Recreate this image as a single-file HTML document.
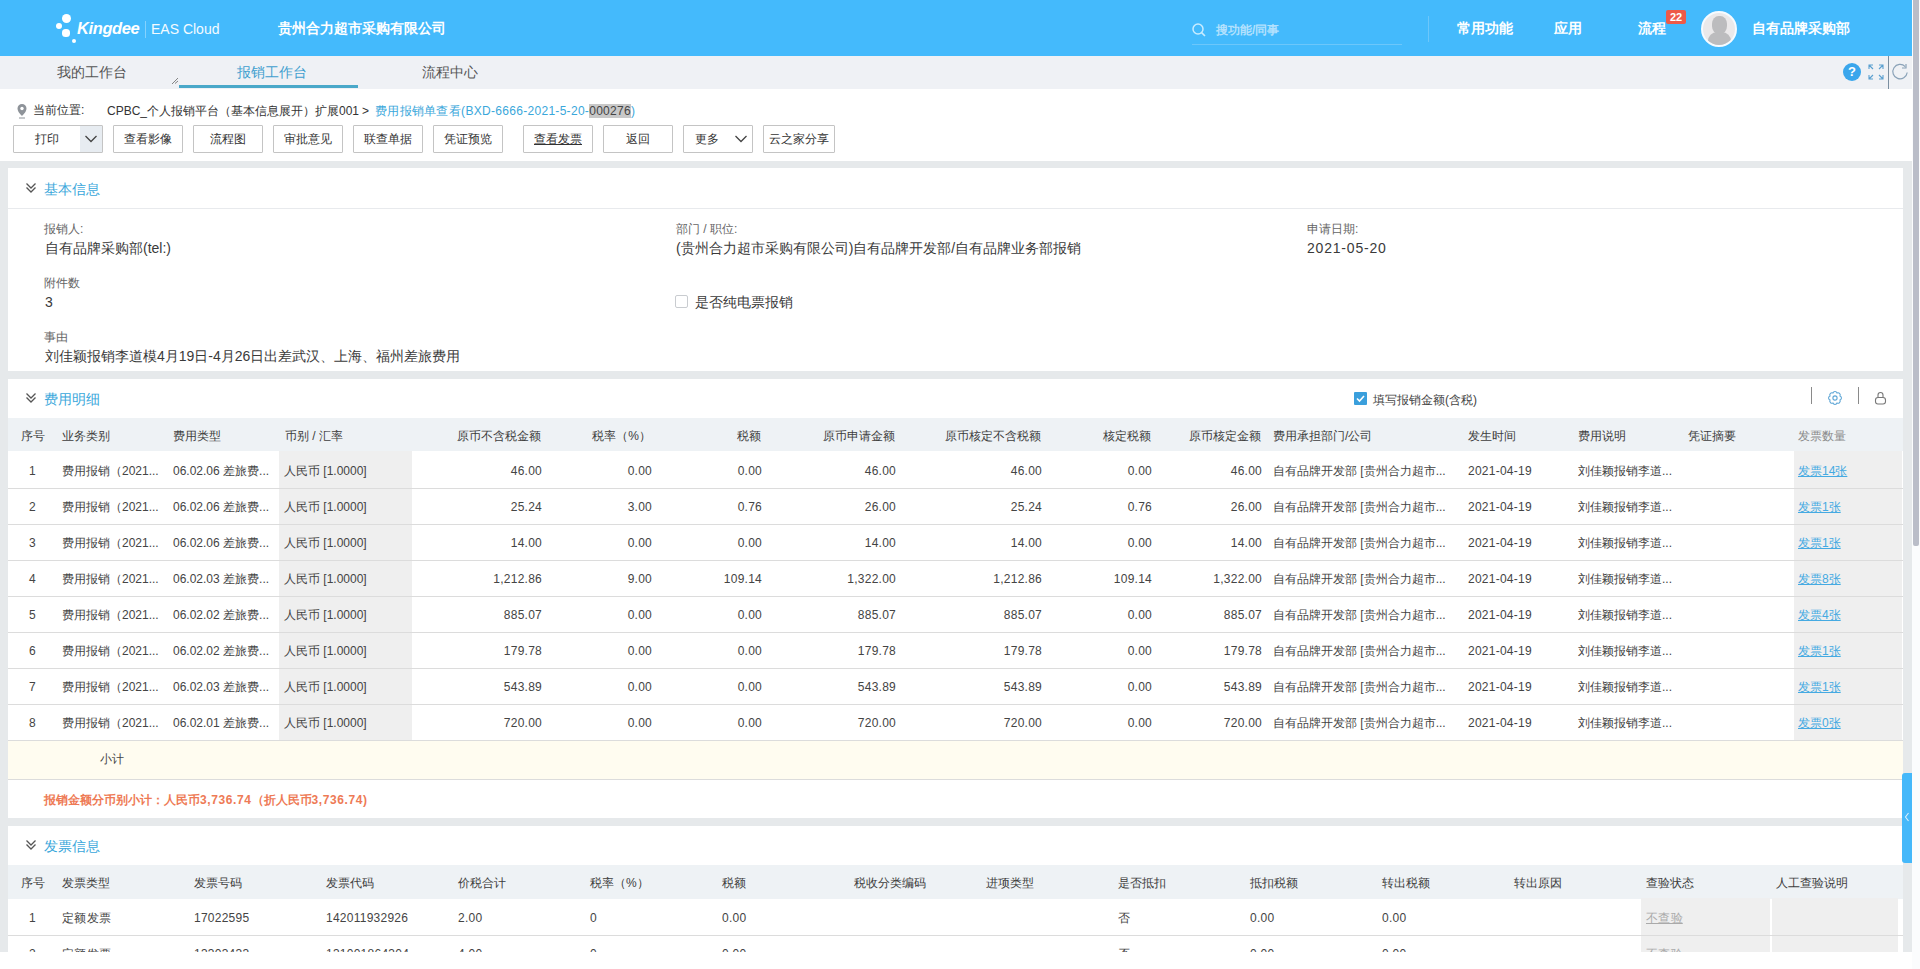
<!DOCTYPE html><html><head><meta charset="utf-8"><style>
*{margin:0;padding:0;box-sizing:border-box}
html,body{width:1920px;height:969px;overflow:hidden;background:#fff;font-family:"Liberation Sans",sans-serif;color:#333;font-size:12px}
.abs{position:absolute}
.t{position:absolute;white-space:nowrap;line-height:16px}
#hdr{position:absolute;left:0;top:0;width:1912px;height:56px;background:#44bafc}
#tabs{position:absolute;left:0;top:56px;width:1912px;height:33px;background:#eff1f5}
.btn{position:absolute;top:125px;height:28px;border:1px solid #c4c4c4;border-radius:1px;background:#fff;text-align:center;line-height:27px;font-size:12px;color:#333}
.band{position:absolute;left:0;background:#e6e9eb}
.card{position:absolute;left:8px;width:1895px;background:#fff}
.sec{position:absolute;font-size:14px;color:#3aa7db;line-height:18px}
.chev{position:absolute;width:12px;height:12px}
.lbl{position:absolute;font-size:12px;color:#666;line-height:14px;white-space:nowrap}
.val{position:absolute;font-size:14px;color:#3a3a3a;line-height:18px;white-space:nowrap}
.th{position:absolute;font-size:12px;color:#3d3d3d;line-height:16px;white-space:nowrap}
.td{position:absolute;font-size:12px;color:#444;line-height:16px;white-space:nowrap}
.n{letter-spacing:0.25px}
.r{text-align:right}
.hl{position:absolute;height:1px;background:#dcdcdc}
.lnk{color:#45aae2;text-decoration:underline}
</style></head><body>
<div id="hdr"></div>
<div class="abs" style="left:61.5px;top:13.5px;width:9.0px;height:9.0px;border-radius:50%;background:#fff"></div>
<div class="abs" style="left:55.6px;top:22.6px;width:6.8px;height:6.8px;border-radius:50%;background:#fff"></div>
<div class="abs" style="left:62.4px;top:29.4px;width:7.2px;height:7.2px;border-radius:50%;background:#fff"></div>
<div class="abs" style="left:71.6px;top:38.6px;width:4.8px;height:4.8px;border-radius:50%;background:#fff"></div>
<div class="t" style="left:77px;top:18px;font-size:16.5px;line-height:20px;color:#fff;font-weight:bold;font-style:italic;letter-spacing:-0.4px">Kingdee</div>
<div class="abs" style="left:145px;top:21px;width:1px;height:17px;background:rgba(255,255,255,.35)"></div>
<div class="t" style="left:151px;top:20px;font-size:14px;line-height:18px;color:#f4fbff">EAS Cloud</div>
<div class="t" style="left:278px;top:19px;font-size:14px;line-height:18px;color:#fff;font-weight:bold">贵州合力超市采购有限公司</div>
<svg class="abs" style="left:1191px;top:22px" width="16" height="16" viewBox="0 0 16 16"><circle cx="7" cy="7" r="5" fill="none" stroke="#c8ecff" stroke-width="1.5"/><line x1="10.6" y1="10.6" x2="14" y2="14" stroke="#c8ecff" stroke-width="1.6"/></svg>
<div class="t" style="left:1216px;top:22px;font-size:12px;font-weight:bold;color:#b3e1fd">搜功能/同事</div>
<div class="abs" style="left:1192px;top:44px;width:210px;height:1px;background:#6cc7fb"></div>
<div class="abs" style="left:1428px;top:16px;width:1px;height:26px;background:#6cc7fb"></div>
<div class="t" style="left:1457px;top:19px;font-size:14px;line-height:18px;color:#fff;font-weight:bold">常用功能</div>
<div class="t" style="left:1554px;top:19px;font-size:14px;line-height:18px;color:#fff;font-weight:bold">应用</div>
<div class="t" style="left:1638px;top:19px;font-size:14px;line-height:18px;color:#fff;font-weight:bold">流程</div>
<div class="abs" style="left:1666px;top:10px;width:20px;height:14px;background:#ee5a48;border-radius:2px;color:#fff;font-size:11px;font-weight:bold;line-height:14px;text-align:center">22</div>
<div class="abs" style="left:1701px;top:11px;width:36px;height:36px;border-radius:50%;background:#ebe9ea;border:2px solid #f6fbff;overflow:hidden"><div class="abs" style="left:9px;top:3px;width:15px;height:18px;border-radius:45%;background:#bcbcbe"></div><div class="abs" style="left:5px;top:19px;width:23px;height:20px;border-radius:9px 9px 0 0;background:#bcbcbe"></div></div>
<div class="t" style="left:1752px;top:19px;font-size:14px;line-height:18px;color:#fff;font-weight:bold">自有品牌采购部</div>
<div id="tabs"></div>
<div class="t" style="left:57px;top:63px;font-size:14px;line-height:18px;color:#555">我的工作台</div>
<div class="t" style="left:237px;top:63px;font-size:14px;line-height:18px;color:#3f9fcf">报销工作台</div>
<div class="abs" style="left:179px;top:85px;width:179px;height:3px;background:#4aa8c9"></div>
<svg class="abs" style="left:171px;top:77px" width="8" height="8" viewBox="0 0 8 8"><path d="M1 7L7 1M4 6.5L7 4" stroke="#777" stroke-width="0.9" fill="none"/></svg>
<div class="t" style="left:422px;top:63px;font-size:14px;line-height:18px;color:#555">流程中心</div>
<div class="abs" style="left:1843px;top:63px;width:18px;height:18px;border-radius:50%;background:#3aa6ec;color:#fff;font-weight:bold;font-size:13px;line-height:18px;text-align:center">?</div>
<svg class="abs" style="left:1868px;top:64px" width="16" height="16" viewBox="0 0 16 16" fill="none" stroke="#5a9fcf" stroke-width="1.1"><path d="M1 5V1h4M11 1h4v4M15 11v4h-4M5 15H1v-4M1 1l4 4M15 1l-4 4M15 15l-4-4M1 15l4-4"/></svg>
<div class="abs" style="left:1888px;top:56px;width:1px;height:33px;background:#7a8ea0"></div>
<svg class="abs" style="left:1891px;top:63px" width="18" height="18" viewBox="0 0 18 18" fill="none" stroke="#8aa2b8" stroke-width="1.2"><path d="M16.2 9.5A7.2 7.2 0 1 1 14.2 3.6"/><path d="M15 1v4h-4"/></svg>
<svg class="abs" style="left:16px;top:103px" width="12" height="16" viewBox="0 0 12 16"><path d="M6 1a4.5 4.5 0 0 0-4.5 4.5C1.5 9 6 13 6 13s4.5-4 4.5-7.5A4.5 4.5 0 0 0 6 1z" fill="#8e9399"/><circle cx="6" cy="5.5" r="1.7" fill="#fff"/><rect x="3" y="14.5" width="6" height="1" fill="#8e9399"/></svg>
<div class="t" style="left:33px;top:102px;color:#333">当前位置:</div>
<div class="t" style="left:107px;top:103px;color:#333">CPBC_个人报销平台（基本信息展开）扩展001</div><div class="t" style="left:362px;top:103px;color:#333">&gt;</div><div class="t" style="left:375px;top:103px;color:#3aa7db;letter-spacing:0.3px">费用报销单查看(BXD-6666-2021-5-20-<span style="background:#c8c8c8;color:#444">000276</span>)</div>
<div class="btn" style="left:13px;width:90px;text-align:left"><div class="abs" style="left:0;top:0;width:66px;text-align:center">打印</div><div class="abs" style="left:66px;top:0;width:22px;height:26px;background:#e7ecf1"></div><svg class="abs" style="left:70px;top:8px" width="14" height="10" viewBox="0 0 14 10"><path d="M1.5 2l5.5 5.5L12.5 2" fill="none" stroke="#444" stroke-width="1.3"/></svg></div>
<div class="btn" style="left:113px;width:70px">查看影像</div>
<div class="btn" style="left:193px;width:70px">流程图</div>
<div class="btn" style="left:273px;width:70px">审批意见</div>
<div class="btn" style="left:353px;width:70px">联查单据</div>
<div class="btn" style="left:433px;width:70px">凭证预览</div>
<div class="btn" style="left:523px;width:70px"><span style="text-decoration:underline">查看发票</span></div>
<div class="btn" style="left:603px;width:70px">返回</div>
<div class="btn" style="left:683px;width:70px;text-align:left"><div class="abs" style="left:0;top:0;width:46px;text-align:center">更多</div><svg class="abs" style="left:50px;top:8px" width="14" height="10" viewBox="0 0 14 10"><path d="M1.5 2l5.5 5.5L12.5 2" fill="none" stroke="#444" stroke-width="1.3"/></svg></div>
<div class="btn" style="left:763px;width:72px">云之家分享</div>
<div class="band" style="top:161px;width:1912px;height:791px"></div>
<div class="card" style="top:168px;height:203px"></div>
<svg class="abs" style="left:25px;top:182px" width="12" height="12" viewBox="0 0 12 12" fill="none" stroke="#555" stroke-width="1.3"><path d="M1.5 1.5L6 6l4.5-4.5M1.5 5.5L6 10l4.5-4.5"/></svg>
<div class="sec" style="left:44px;top:180px">基本信息</div>
<div class="hl" style="left:8px;top:208px;width:1895px;background:#e8eaed"></div>
<div class="lbl" style="left:44px;top:222px">报销人:</div>
<div class="val" style="left:45px;top:239px">自有品牌采购部(tel:)</div>
<div class="lbl" style="left:676px;top:222px">部门 / 职位:</div>
<div class="val" style="left:676px;top:239px">(贵州合力超市采购有限公司)自有品牌开发部/自有品牌业务部报销</div>
<div class="lbl" style="left:1307px;top:222px">申请日期:</div>
<div class="val" style="left:1307px;top:239px;letter-spacing:0.8px">2021-05-20</div>
<div class="lbl" style="left:44px;top:276px">附件数</div>
<div class="val" style="left:45px;top:293px">3</div>
<div class="abs" style="left:675px;top:295px;width:13px;height:13px;border:1px solid #c9ccd0;border-radius:2px;background:#fff"></div>
<div class="val" style="left:695px;top:293px">是否纯电票报销</div>
<div class="lbl" style="left:44px;top:330px">事由</div>
<div class="val" style="left:45px;top:347px">刘佳颖报销李道模4月19日-4月26日出差武汉、上海、福州差旅费用</div>
<div class="card" style="top:379px;height:439px"></div>
<svg class="abs" style="left:25px;top:392px" width="12" height="12" viewBox="0 0 12 12" fill="none" stroke="#555" stroke-width="1.3"><path d="M1.5 1.5L6 6l4.5-4.5M1.5 5.5L6 10l4.5-4.5"/></svg>
<div class="sec" style="left:44px;top:390px">费用明细</div>
<div class="abs" style="left:1354px;top:392px;width:13px;height:13px;background:#3a9fdc;border-radius:1px"><svg class="abs" style="left:0;top:0" width="13" height="13" viewBox="0 0 13 13"><path d="M3 6.5l2.5 2.5L10 4" fill="none" stroke="#fff" stroke-width="1.6"/></svg></div>
<div class="t" style="left:1373px;top:392px;color:#444">填写报销金额(含税)</div>
<div class="abs" style="left:1811px;top:387px;width:1px;height:17px;background:#8a8a8a"></div>
<svg class="abs" style="left:1827px;top:390px" width="16" height="16" viewBox="0 0 16 16" fill="none" stroke="#5ea6d6" stroke-width="1.1"><circle cx="8" cy="8" r="2.1"/><path d="M12.99 10.07A2.2 2.2 0 0 1 10.07 12.99A2.2 2.2 0 0 1 5.93 12.99A2.2 2.2 0 0 1 3.01 10.07A2.2 2.2 0 0 1 3.01 5.93A2.2 2.2 0 0 1 5.93 3.01A2.2 2.2 0 0 1 10.07 3.01A2.2 2.2 0 0 1 12.99 5.93A2.2 2.2 0 0 1 12.99 10.07Z"/></svg>
<div class="abs" style="left:1858px;top:387px;width:1px;height:17px;background:#8a8a8a"></div>
<svg class="abs" style="left:1873px;top:390px" width="14" height="15" viewBox="0 0 14 15" fill="none" stroke="#777" stroke-width="1.1"><rect x="2.5" y="7.5" width="10" height="6.5" rx="2.5"/><path d="M5 7.5V5a2.5 2.5 0 0 1 5 0v2.5"/></svg>
<div class="abs" style="left:8px;top:418px;width:1895px;height:33px;background:#eef2f5"></div>
<div class="th" style="left:21px;top:428px;">序号</div>
<div class="th" style="left:62px;top:428px;">业务类别</div>
<div class="th" style="left:173px;top:428px;">费用类型</div>
<div class="th" style="left:285px;top:428px;">币别 / 汇率</div>
<div class="th r" style="right:1379px;top:428px;">原币不含税金额</div>
<div class="th r" style="right:1269px;top:428px;">税率（%）</div>
<div class="th r" style="right:1159px;top:428px;">税额</div>
<div class="th r" style="right:1025px;top:428px;">原币申请金额</div>
<div class="th r" style="right:879px;top:428px;">原币核定不含税额</div>
<div class="th r" style="right:769px;top:428px;">核定税额</div>
<div class="th r" style="right:659px;top:428px;">原币核定金额</div>
<div class="th" style="left:1273px;top:428px;">费用承担部门/公司</div>
<div class="th" style="left:1468px;top:428px;">发生时间</div>
<div class="th" style="left:1578px;top:428px;">费用说明</div>
<div class="th" style="left:1688px;top:428px;">凭证摘要</div>
<div class="th" style="left:1798px;top:428px;color:#8a8a8a">发票数量</div>
<div class="abs" style="left:279px;top:451px;width:133px;height:289px;background:#efefef"></div>
<div class="abs" style="left:1794px;top:451px;width:108px;height:289px;background:#efefef"></div>
<div class="hl" style="left:8px;top:488px;width:1895px"></div>
<div class="td" style="left:29px;top:463px">1</div>
<div class="td" style="left:62px;top:463px">费用报销（2021...</div>
<div class="td" style="left:173px;top:463px">06.02.06 差旅费...</div>
<div class="td" style="left:284px;top:463px">人民币 [1.0000]</div>
<div class="td n r" style="right:1378px;top:463px;">46.00</div>
<div class="td n r" style="right:1268px;top:463px;">0.00</div>
<div class="td n r" style="right:1158px;top:463px;">0.00</div>
<div class="td n r" style="right:1024px;top:463px;">46.00</div>
<div class="td n r" style="right:878px;top:463px;">46.00</div>
<div class="td n r" style="right:768px;top:463px;">0.00</div>
<div class="td n r" style="right:658px;top:463px;">46.00</div>
<div class="td" style="left:1273px;top:463px">自有品牌开发部 [贵州合力超市...</div>
<div class="td n" style="left:1468px;top:463px">2021-04-19</div>
<div class="td" style="left:1578px;top:463px">刘佳颖报销李道...</div>
<div class="td lnk" style="left:1798px;top:463px">发票14张</div>
<div class="hl" style="left:8px;top:524px;width:1895px"></div>
<div class="td" style="left:29px;top:499px">2</div>
<div class="td" style="left:62px;top:499px">费用报销（2021...</div>
<div class="td" style="left:173px;top:499px">06.02.06 差旅费...</div>
<div class="td" style="left:284px;top:499px">人民币 [1.0000]</div>
<div class="td n r" style="right:1378px;top:499px;">25.24</div>
<div class="td n r" style="right:1268px;top:499px;">3.00</div>
<div class="td n r" style="right:1158px;top:499px;">0.76</div>
<div class="td n r" style="right:1024px;top:499px;">26.00</div>
<div class="td n r" style="right:878px;top:499px;">25.24</div>
<div class="td n r" style="right:768px;top:499px;">0.76</div>
<div class="td n r" style="right:658px;top:499px;">26.00</div>
<div class="td" style="left:1273px;top:499px">自有品牌开发部 [贵州合力超市...</div>
<div class="td n" style="left:1468px;top:499px">2021-04-19</div>
<div class="td" style="left:1578px;top:499px">刘佳颖报销李道...</div>
<div class="td lnk" style="left:1798px;top:499px">发票1张</div>
<div class="hl" style="left:8px;top:560px;width:1895px"></div>
<div class="td" style="left:29px;top:535px">3</div>
<div class="td" style="left:62px;top:535px">费用报销（2021...</div>
<div class="td" style="left:173px;top:535px">06.02.06 差旅费...</div>
<div class="td" style="left:284px;top:535px">人民币 [1.0000]</div>
<div class="td n r" style="right:1378px;top:535px;">14.00</div>
<div class="td n r" style="right:1268px;top:535px;">0.00</div>
<div class="td n r" style="right:1158px;top:535px;">0.00</div>
<div class="td n r" style="right:1024px;top:535px;">14.00</div>
<div class="td n r" style="right:878px;top:535px;">14.00</div>
<div class="td n r" style="right:768px;top:535px;">0.00</div>
<div class="td n r" style="right:658px;top:535px;">14.00</div>
<div class="td" style="left:1273px;top:535px">自有品牌开发部 [贵州合力超市...</div>
<div class="td n" style="left:1468px;top:535px">2021-04-19</div>
<div class="td" style="left:1578px;top:535px">刘佳颖报销李道...</div>
<div class="td lnk" style="left:1798px;top:535px">发票1张</div>
<div class="hl" style="left:8px;top:596px;width:1895px"></div>
<div class="td" style="left:29px;top:571px">4</div>
<div class="td" style="left:62px;top:571px">费用报销（2021...</div>
<div class="td" style="left:173px;top:571px">06.02.03 差旅费...</div>
<div class="td" style="left:284px;top:571px">人民币 [1.0000]</div>
<div class="td n r" style="right:1378px;top:571px;">1,212.86</div>
<div class="td n r" style="right:1268px;top:571px;">9.00</div>
<div class="td n r" style="right:1158px;top:571px;">109.14</div>
<div class="td n r" style="right:1024px;top:571px;">1,322.00</div>
<div class="td n r" style="right:878px;top:571px;">1,212.86</div>
<div class="td n r" style="right:768px;top:571px;">109.14</div>
<div class="td n r" style="right:658px;top:571px;">1,322.00</div>
<div class="td" style="left:1273px;top:571px">自有品牌开发部 [贵州合力超市...</div>
<div class="td n" style="left:1468px;top:571px">2021-04-19</div>
<div class="td" style="left:1578px;top:571px">刘佳颖报销李道...</div>
<div class="td lnk" style="left:1798px;top:571px">发票8张</div>
<div class="hl" style="left:8px;top:632px;width:1895px"></div>
<div class="td" style="left:29px;top:607px">5</div>
<div class="td" style="left:62px;top:607px">费用报销（2021...</div>
<div class="td" style="left:173px;top:607px">06.02.02 差旅费...</div>
<div class="td" style="left:284px;top:607px">人民币 [1.0000]</div>
<div class="td n r" style="right:1378px;top:607px;">885.07</div>
<div class="td n r" style="right:1268px;top:607px;">0.00</div>
<div class="td n r" style="right:1158px;top:607px;">0.00</div>
<div class="td n r" style="right:1024px;top:607px;">885.07</div>
<div class="td n r" style="right:878px;top:607px;">885.07</div>
<div class="td n r" style="right:768px;top:607px;">0.00</div>
<div class="td n r" style="right:658px;top:607px;">885.07</div>
<div class="td" style="left:1273px;top:607px">自有品牌开发部 [贵州合力超市...</div>
<div class="td n" style="left:1468px;top:607px">2021-04-19</div>
<div class="td" style="left:1578px;top:607px">刘佳颖报销李道...</div>
<div class="td lnk" style="left:1798px;top:607px">发票4张</div>
<div class="hl" style="left:8px;top:668px;width:1895px"></div>
<div class="td" style="left:29px;top:643px">6</div>
<div class="td" style="left:62px;top:643px">费用报销（2021...</div>
<div class="td" style="left:173px;top:643px">06.02.02 差旅费...</div>
<div class="td" style="left:284px;top:643px">人民币 [1.0000]</div>
<div class="td n r" style="right:1378px;top:643px;">179.78</div>
<div class="td n r" style="right:1268px;top:643px;">0.00</div>
<div class="td n r" style="right:1158px;top:643px;">0.00</div>
<div class="td n r" style="right:1024px;top:643px;">179.78</div>
<div class="td n r" style="right:878px;top:643px;">179.78</div>
<div class="td n r" style="right:768px;top:643px;">0.00</div>
<div class="td n r" style="right:658px;top:643px;">179.78</div>
<div class="td" style="left:1273px;top:643px">自有品牌开发部 [贵州合力超市...</div>
<div class="td n" style="left:1468px;top:643px">2021-04-19</div>
<div class="td" style="left:1578px;top:643px">刘佳颖报销李道...</div>
<div class="td lnk" style="left:1798px;top:643px">发票1张</div>
<div class="hl" style="left:8px;top:704px;width:1895px"></div>
<div class="td" style="left:29px;top:679px">7</div>
<div class="td" style="left:62px;top:679px">费用报销（2021...</div>
<div class="td" style="left:173px;top:679px">06.02.03 差旅费...</div>
<div class="td" style="left:284px;top:679px">人民币 [1.0000]</div>
<div class="td n r" style="right:1378px;top:679px;">543.89</div>
<div class="td n r" style="right:1268px;top:679px;">0.00</div>
<div class="td n r" style="right:1158px;top:679px;">0.00</div>
<div class="td n r" style="right:1024px;top:679px;">543.89</div>
<div class="td n r" style="right:878px;top:679px;">543.89</div>
<div class="td n r" style="right:768px;top:679px;">0.00</div>
<div class="td n r" style="right:658px;top:679px;">543.89</div>
<div class="td" style="left:1273px;top:679px">自有品牌开发部 [贵州合力超市...</div>
<div class="td n" style="left:1468px;top:679px">2021-04-19</div>
<div class="td" style="left:1578px;top:679px">刘佳颖报销李道...</div>
<div class="td lnk" style="left:1798px;top:679px">发票1张</div>
<div class="hl" style="left:8px;top:740px;width:1895px"></div>
<div class="td" style="left:29px;top:715px">8</div>
<div class="td" style="left:62px;top:715px">费用报销（2021...</div>
<div class="td" style="left:173px;top:715px">06.02.01 差旅费...</div>
<div class="td" style="left:284px;top:715px">人民币 [1.0000]</div>
<div class="td n r" style="right:1378px;top:715px;">720.00</div>
<div class="td n r" style="right:1268px;top:715px;">0.00</div>
<div class="td n r" style="right:1158px;top:715px;">0.00</div>
<div class="td n r" style="right:1024px;top:715px;">720.00</div>
<div class="td n r" style="right:878px;top:715px;">720.00</div>
<div class="td n r" style="right:768px;top:715px;">0.00</div>
<div class="td n r" style="right:658px;top:715px;">720.00</div>
<div class="td" style="left:1273px;top:715px">自有品牌开发部 [贵州合力超市...</div>
<div class="td n" style="left:1468px;top:715px">2021-04-19</div>
<div class="td" style="left:1578px;top:715px">刘佳颖报销李道...</div>
<div class="td lnk" style="left:1798px;top:715px">发票0张</div>
<div class="abs" style="left:8px;top:741px;width:1895px;height:38px;background:#fffcf0"></div>
<div class="hl" style="left:8px;top:779px;width:1895px"></div>
<div class="td" style="left:100px;top:751px">小计</div>
<div class="t" style="left:44px;top:792px;color:#ee7a55;font-weight:bold">报销金额分币别小计：人民币<span style="letter-spacing:0.6px">3,736.74</span>（折人民币<span style="letter-spacing:0.6px">3,736.74</span>)</div>
<div class="card" style="top:826px;height:126px"></div>
<svg class="abs" style="left:25px;top:839px" width="12" height="12" viewBox="0 0 12 12" fill="none" stroke="#555" stroke-width="1.3"><path d="M1.5 1.5L6 6l4.5-4.5M1.5 5.5L6 10l4.5-4.5"/></svg>
<div class="sec" style="left:44px;top:837px">发票信息</div>
<div class="abs" style="left:8px;top:865px;width:1895px;height:34px;background:#eef2f5"></div>
<div class="th" style="left:21px;top:875px">序号</div>
<div class="th" style="left:62px;top:875px">发票类型</div>
<div class="th" style="left:194px;top:875px">发票号码</div>
<div class="th" style="left:326px;top:875px">发票代码</div>
<div class="th" style="left:458px;top:875px">价税合计</div>
<div class="th" style="left:590px;top:875px">税率（%）</div>
<div class="th" style="left:722px;top:875px">税额</div>
<div class="th" style="left:854px;top:875px">税收分类编码</div>
<div class="th" style="left:986px;top:875px">进项类型</div>
<div class="th" style="left:1118px;top:875px">是否抵扣</div>
<div class="th" style="left:1250px;top:875px">抵扣税额</div>
<div class="th" style="left:1382px;top:875px">转出税额</div>
<div class="th" style="left:1514px;top:875px">转出原因</div>
<div class="th" style="left:1646px;top:875px">查验状态</div>
<div class="th" style="left:1776px;top:875px">人工查验说明</div>
<div class="abs" style="left:1641px;top:898px;width:129px;height:54px;background:#efefef"></div>
<div class="abs" style="left:1772px;top:898px;width:126px;height:54px;background:#efefef"></div>
<div class="hl" style="left:8px;top:935px;width:1895px"></div>
<div class="td n" style="left:29px;top:910px;">1</div>
<div class="td n" style="left:62px;top:910px;">定额发票</div>
<div class="td n" style="left:194px;top:910px;">17022595</div>
<div class="td n" style="left:326px;top:910px;">142011932926</div>
<div class="td n" style="left:458px;top:910px;">2.00</div>
<div class="td n" style="left:590px;top:910px;">0</div>
<div class="td n" style="left:722px;top:910px;">0.00</div>
<div class="td n" style="left:1118px;top:910px;">否</div>
<div class="td n" style="left:1250px;top:910px;">0.00</div>
<div class="td n" style="left:1382px;top:910px;">0.00</div>
<div class="td n" style="left:1646px;top:910px;color:#aaa;text-decoration:underline">不查验</div>
<div class="td n" style="left:29px;top:946px;">2</div>
<div class="td n" style="left:62px;top:946px;">定额发票</div>
<div class="td n" style="left:194px;top:946px;">13303433</div>
<div class="td n" style="left:326px;top:946px;">131001864304</div>
<div class="td n" style="left:458px;top:946px;">4.00</div>
<div class="td n" style="left:590px;top:946px;">0</div>
<div class="td n" style="left:722px;top:946px;">0.00</div>
<div class="td n" style="left:1118px;top:946px;">否</div>
<div class="td n" style="left:1250px;top:946px;">0.00</div>
<div class="td n" style="left:1382px;top:946px;">0.00</div>
<div class="td n" style="left:1646px;top:946px;color:#aaa;text-decoration:underline">不查验</div>
<div class="abs" style="left:0;top:952px;width:1920px;height:17px;background:#fff"></div>
<div class="abs" style="left:1912px;top:0;width:8px;height:969px;background:#fbfcfd"></div>
<div class="abs" style="left:1913px;top:0;width:6px;height:546px;background:#babdc8;border-radius:0 0 2px 2px"></div>
<div class="abs" style="left:1902px;top:773px;width:10px;height:90px;background:#45b8fa;border-radius:3px 0 0 3px"></div>
<svg class="abs" style="left:1903px;top:811px" width="8" height="12" viewBox="0 0 8 12"><path d="M5.5 2L2.5 6l3 4" fill="none" stroke="#d8f0ff" stroke-width="1.1"/></svg>
</body></html>
